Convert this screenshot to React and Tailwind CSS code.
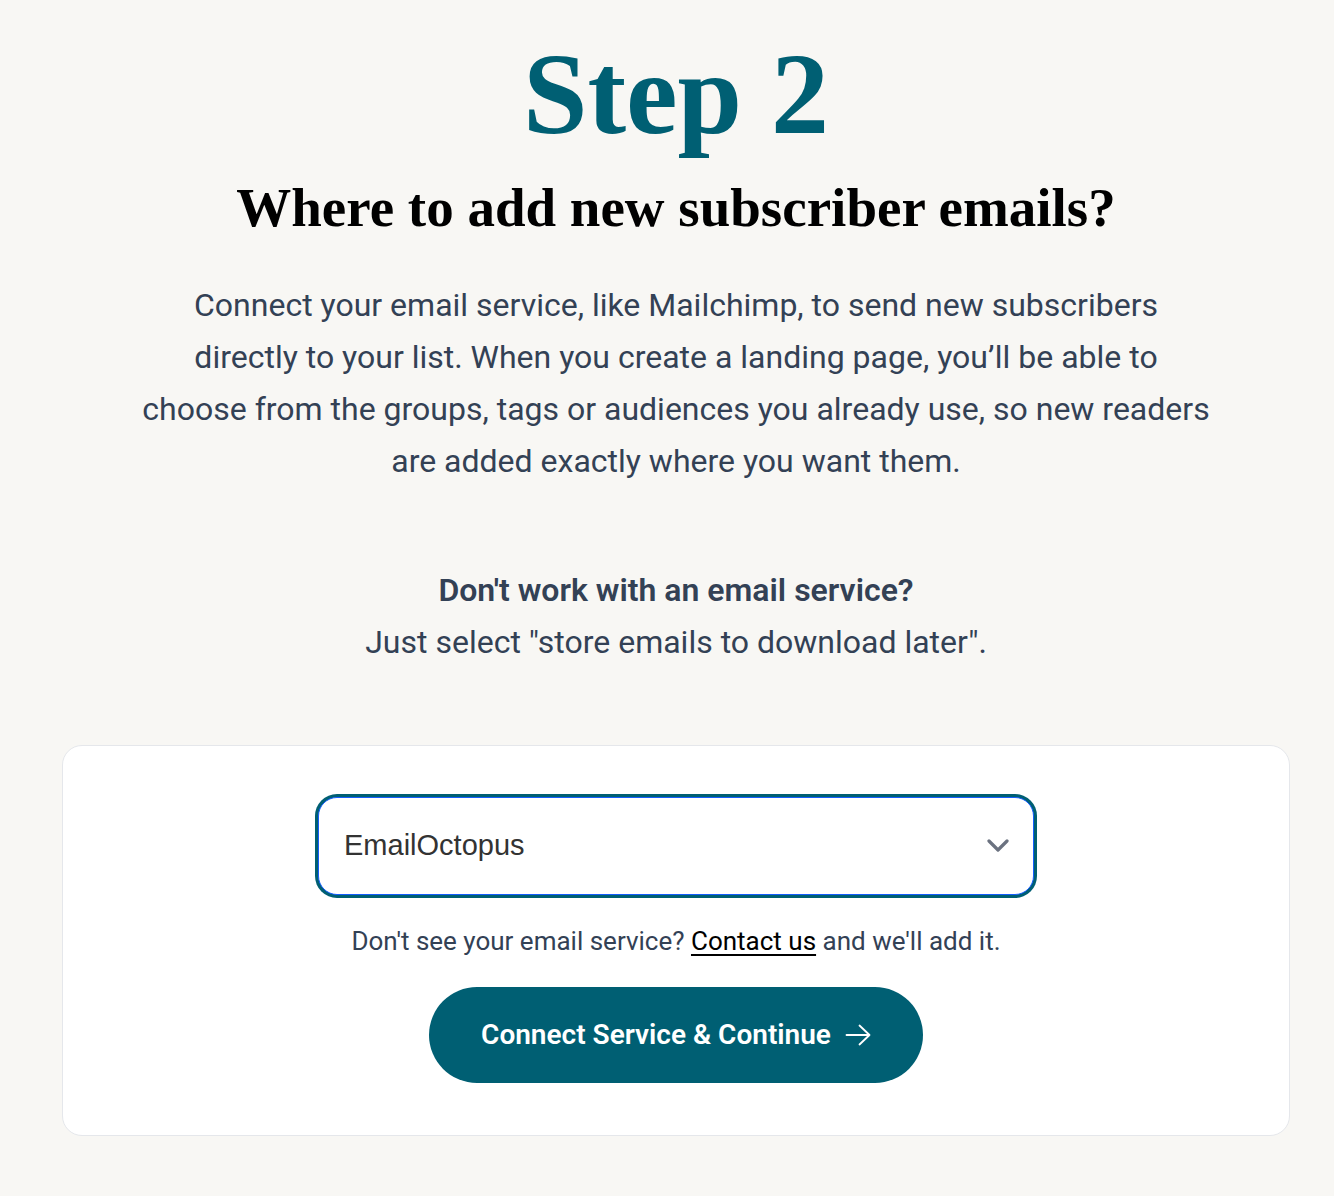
import React from "react";

export default function App() {
  return (
    <main className="min-h-screen bg-[#f8f7f4] pt-7 pr-11 pb-15 pl-[62px] text-center font-['Roboto',sans-serif] text-[#334155]">
      <header className="mx-auto max-w-[1100px]">
        <h1 className="font-['Liberation_Serif',serif] text-[116px] leading-[132px] font-bold text-[#005f73]">
          Step 2
        </h1>
        <h2 className="mt-4 font-['Liberation_Serif',serif] text-[55px] leading-16 font-bold text-black">
          Where to add new subscriber emails?
        </h2>
        <p className="mt-[39px] text-[32px] leading-[52px]">
          Connect your email service, like Mailchimp, to send new subscribers
          <br />
          directly to your list. When you create a landing page, you’ll be able to
          <br />
          choose from the groups, tags or audiences you already use, so new readers
          <br />
          are added exactly where you want them.
        </p>
        <p className="mt-[77px] text-[32px] leading-[52px]">
          <strong className="font-semibold">Don't work with an email service?</strong>
          <br />
          Just select "store emails to download later".
        </p>
      </header>

      <form
        className="mt-[77px] flex flex-col items-center rounded-[20px] border border-gray-200 bg-white px-6 pt-[51px] pb-[52px]"
        onSubmit={(e) => e.preventDefault()}
      >
        <div className="grid w-full max-w-[716px] items-center">
          <select
            aria-label="Email service"
            defaultValue="EmailOctopus"
            className="col-start-1 row-start-1 h-[98px] w-full appearance-none rounded-[19px] border border-blue-600 bg-white px-[25px] font-['Liberation_Sans',sans-serif] text-[29px] text-[#333333] ring-3 ring-[#005f73] outline-none"
          >
            <option>EmailOctopus</option>
            <option>Mailchimp</option>
            <option>Store emails to download later</option>
          </select>
          <svg
            viewBox="0 0 24 14"
            className="pointer-events-none col-start-1 row-start-1 mr-6 h-3.5 w-6 justify-self-end"
            fill="none"
            stroke="#6b7280"
            strokeWidth="3.2"
            strokeLinecap="round"
            strokeLinejoin="round"
            aria-hidden="true"
          >
            <path d="M3 2 12 11 21 2" />
          </svg>
        </div>
        <p className="mt-[26px] text-[26px] leading-10">
          Don't see your email service?{" "}
          <a href="#contact" className="text-black underline decoration-2 underline-offset-4">
            Contact us
          </a>{" "}
          and we'll add it.
        </p>
        <button
          type="submit"
          className="mt-[26px] flex h-24 items-center gap-3.5 rounded-full bg-[#005f73] px-[52px] text-[28px] font-semibold text-white"
        >
          Connect Service &amp; Continue
          <svg viewBox="0 0 26 24" className="h-6 w-[26px]" fill="none" stroke="currentColor" strokeWidth="1.8" strokeLinecap="round" strokeLinejoin="round" aria-hidden="true">
            <path d="M1.5 12H24.5M14.5 2.5 24.5 12 14.5 21.5" />
          </svg>
        </button>
      </form>
    </main>
  );
}
